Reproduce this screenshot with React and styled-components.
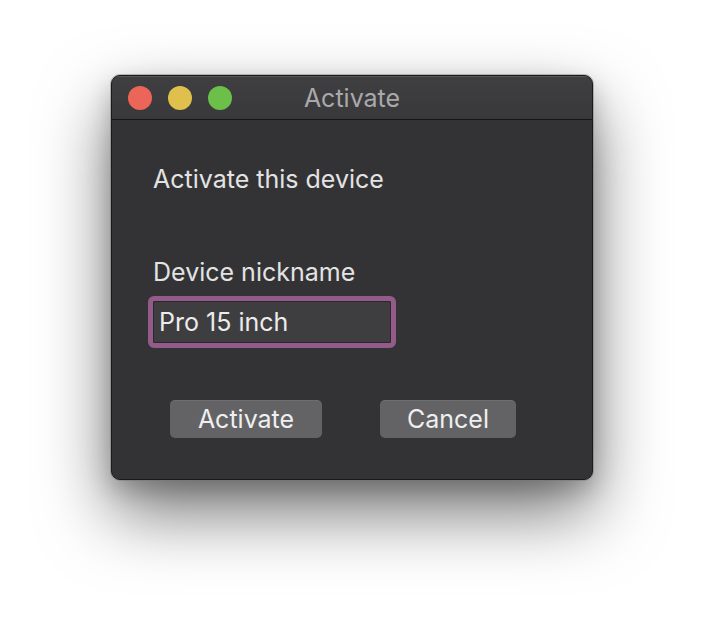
import React, { useState } from "react";
import styled, { createGlobalStyle } from "styled-components";

const GlobalStyle = createGlobalStyle`
  html, body {
    margin: 0;
    padding: 0;
    background: #ffffff;
  }
  body {
    font-family: Inter, "Noto Sans", sans-serif;
  }
`;

const Page = styled.div`
  width: 704px;
  height: 628px;
  box-sizing: border-box;
  padding: 75px 0 0 111px;
  background: #ffffff;
`;

const Window = styled.div`
  width: 482px;
  height: 405px;
  box-sizing: border-box;
  display: flex;
  flex-direction: column;
  background: #333335;
  border: 1px solid #1a1a1b;
  border-radius: 9px;
  box-shadow: 0 0 0 1px rgba(120, 120, 120, 0.45), 0 32px 70px rgba(0, 0, 0, 0.55),
    0 10px 25px rgba(0, 0, 0, 0.2);
  overflow: hidden;
`;

const TitleBar = styled.div`
  position: relative;
  height: 43px;
  flex-shrink: 0;
  display: flex;
  align-items: center;
  padding-left: 16px;
  background: linear-gradient(#3f3f41, #39393b);
  border-bottom: 1px solid #151516;
  box-shadow: inset 0 1px 0 rgba(255, 255, 255, 0.12);
`;

const Lights = styled.div`
  display: flex;
  gap: 16px;
`;

const Light = styled.span`
  width: 24px;
  height: 24px;
  border-radius: 50%;
  background: ${(p) => p.color};
`;

const Title = styled.div`
  position: absolute;
  left: 0;
  right: 0;
  top: 0;
  bottom: 0;
  display: flex;
  align-items: center;
  justify-content: center;
  color: #a9a9ab;
  font-size: 25px;
  pointer-events: none;
`;

const Body = styled.div`
  flex: 1;
  display: flex;
  flex-direction: column;
  padding: 44px 0 0 41px;
  color: #e3e3e4;
`;

const Heading = styled.div`
  font-size: 25px;
  line-height: 30px;
`;

const Label = styled.div`
  margin-top: 63px;
  font-size: 25px;
  line-height: 30px;
`;

const Field = styled.input`
  margin: 9px 0 0 -5px;
  width: 248px;
  height: 52px;
  box-sizing: border-box;
  padding: 0 0 0 6px;
  background: #3e3e40;
  border: 5px solid #935a8a;
  border-radius: 6px;
  box-shadow: inset 0 0 0 1px #2a2a2c;
  color: #ececed;
  font-family: Inter, "Noto Sans", sans-serif;
  font-size: 25px;
  outline: none;
`;

const Buttons = styled.div`
  display: flex;
  gap: 58px;
  margin: 52px 0 0 17px;
`;

const Button = styled.button`
  width: ${(p) => p.width}px;
  height: 38px;
  padding: 0;
  border: none;
  border-radius: 5px;
  background: #636365;
  box-shadow: inset 0 1px 0 rgba(255, 255, 255, 0.08);
  color: #efeff0;
  font-family: Inter, "Noto Sans", sans-serif;
  font-size: 25px;
  cursor: pointer;
`;

export default function App() {
  const [nickname, setNickname] = useState("Pro 15 inch");

  return (
    <Page>
      <GlobalStyle />
      <Window>
        <TitleBar>
          <Lights>
            <Light color="#ec6559" />
            <Light color="#e0c04c" />
            <Light color="#6cbf48" />
          </Lights>
          <Title>Activate</Title>
        </TitleBar>
        <Body>
          <Heading>Activate this device</Heading>
          <Label>Device nickname</Label>
          <Field value={nickname} onChange={(e) => setNickname(e.target.value)} />
          <Buttons>
            <Button width={152}>Activate</Button>
            <Button width={136}>Cancel</Button>
          </Buttons>
        </Body>
      </Window>
    </Page>
  );
}
